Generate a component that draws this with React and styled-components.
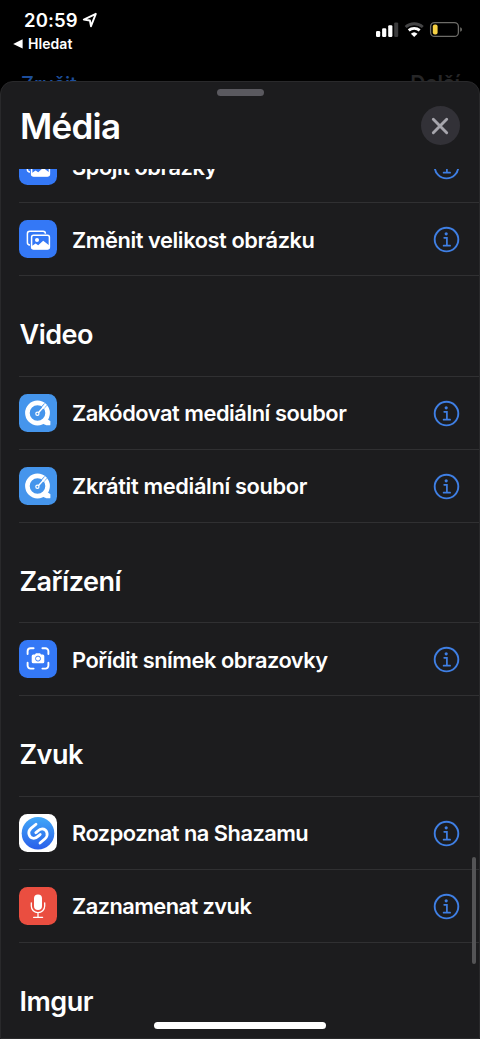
import React from 'react'
import styled, { createGlobalStyle } from 'styled-components'

const GlobalStyle = createGlobalStyle`
    html, body {
        margin: 0;
        padding: 0;
        background: #000;
        overflow: hidden;
    }
    * {
        box-sizing: border-box;
    }
`

const sections = [
    {
        rows: [
            { label: 'Spojit obrázky', icon: 'photos', spacing: '-0.45px' },
            { label: 'Změnit velikost obrázku', icon: 'photos', spacing: '-0.41px' },
        ],
    },
    {
        title: 'Video',
        rows: [
            { label: 'Zakódovat mediální soubor', icon: 'quicktime', spacing: '-0.44px' },
            { label: 'Zkrátit mediální soubor', icon: 'quicktime', spacing: '-0.34px' },
        ],
    },
    {
        title: 'Zařízení',
        rows: [{ label: 'Pořídit snímek obrazovky', icon: 'screenshot', spacing: '-0.45px' }],
    },
    {
        title: 'Zvuk',
        rows: [
            { label: 'Rozpoznat na Shazamu', icon: 'shazam', spacing: '-0.5px' },
            { label: 'Zaznamenat zvuk', icon: 'mic', spacing: '-0.54px' },
        ],
    },
    { title: 'Imgur', rows: [] },
]

const tileColors = {
    photos: '#3478f6',
    quicktime: '#4595ec',
    screenshot: '#3478f6',
    shazam: '#fff',
    mic: '#ea4e40',
}

const PhotosIcon = () => (
    <svg width="38" height="38" viewBox="0 0 38 38" fill="none">
        <rect x="8.4" y="11.3" width="18" height="13.6" rx="2.4" stroke="#fff" strokeWidth="1.5" />
        <rect x="11" y="13.7" width="21" height="17" rx="3.4" fill="#3478f6" />
        <rect x="12.6" y="15.3" width="17.8" height="13.8" rx="2" stroke="#fff" strokeWidth="1.5" />
        <circle cx="18" cy="20" r="2" fill="#fff" />
        <path d="M12.5 26.3 L16.6 23.4 L19.2 25.2 L24.2 20.8 L30.4 25.6 V27.5 A2 2 0 0 1 28.6 29.2 H14.5 A2 2 0 0 1 12.5 27.5 Z" fill="#fff" />
    </svg>
)

const QuickTimeIcon = () => (
    <svg width="38" height="38" viewBox="0 0 38 38" fill="none">
        <circle cx="18.5" cy="19" r="10.1" stroke="#fff" strokeWidth="4.6" />
        <path d="M22 26 L29 25.4 L31.4 27.2 V30.4 A0.9 0.9 0 0 1 30.5 31.3 H27.4 Q24.8 31 22 28 Z" fill="#fff" />
        <path d="M22 15.5 L26.6 10.6" stroke="#4595ec" strokeWidth="3.6" />
        <path d="M19.6 18.5 L24.8 12.8" stroke="#fff" strokeWidth="1.4" strokeLinecap="round" />
        <path d="M24.2 13.4 L26.2 10.9" stroke="#fff" strokeWidth="2.4" strokeLinecap="round" />
        <circle cx="18.4" cy="19.8" r="1.6" stroke="#fff" strokeWidth="1.2" />
    </svg>
)

const ScreenshotIcon = () => (
    <svg width="38" height="38" viewBox="0 0 38 38" fill="none">
        <path
            d="M8.6 14 V11.2 A3 3 0 0 1 11.6 8.2 H14.6 M23.4 8.2 H26.4 A3 3 0 0 1 29.4 11.2 V14 M29.4 22.8 V25.6 A3 3 0 0 1 26.4 28.6 H23.4 M14.6 28.6 H11.6 A3 3 0 0 1 8.6 25.6 V22.8"
            stroke="#fff"
            strokeWidth="1.9"
            strokeLinecap="round"
        />
        <path d="M14.2 14.4 H16 L16.9 13.2 H21.1 L22 14.4 H23.8 A1.5 1.5 0 0 1 25.3 15.9 V21.8 A1.5 1.5 0 0 1 23.8 23.3 H14.2 A1.5 1.5 0 0 1 12.7 21.8 V15.9 A1.5 1.5 0 0 1 14.2 14.4 Z" fill="#fff" />
        <circle cx="19" cy="18.6" r="2.5" stroke="#3478f6" strokeWidth="0.9" />
    </svg>
)

const ShazamIcon = () => (
    <svg width="38" height="38" viewBox="0 0 38 38" fill="none">
        <defs>
            <linearGradient id="shazam" x1="0" y1="0" x2="0" y2="1">
                <stop offset="0" stopColor="#42a8f8" />
                <stop offset="1" stopColor="#2a5fea" />
            </linearGradient>
        </defs>
        <circle cx="19" cy="19.2" r="16.3" fill="url(#shazam)" />
        <g stroke="#fff" strokeWidth="2.8" strokeLinecap="round">
            <path d="M17 10.2 L12 14.4 C8 18 10 24.3 14.8 24.3 C17.4 24.3 19 22.3 21.2 20.5" />
            <path d="M21 29 L26 24.8 C30 21.2 28 14.9 23.2 14.9 C20.6 14.9 19 16.9 16.8 18.7" />
        </g>
    </svg>
)

const MicIcon = () => (
    <svg width="38" height="38" viewBox="0 0 38 38" fill="none">
        <rect x="15" y="7.4" width="8" height="15.6" rx="4" fill="#fff" />
        <path d="M12.3 15.8 V19 A6.7 6.7 0 0 0 25.7 19 V15.8 M19 26 V30 M14.6 30.3 H23.6" stroke="#fff" strokeWidth="1.3" strokeLinecap="round" />
    </svg>
)

const icons = {
    photos: PhotosIcon,
    quicktime: QuickTimeIcon,
    screenshot: ScreenshotIcon,
    shazam: ShazamIcon,
    mic: MicIcon,
}

const InfoIcon = () => (
    <svg width="28" height="28" viewBox="0 0 28 28" fill="none">
        <circle cx="13.5" cy="14.6" r="11.8" stroke="#3f7fe4" strokeWidth="1.9" />
        <circle cx="13.2" cy="8.8" r="1.6" fill="#3f7fe4" />
        <path d="M11.2 12.8 H13.9 V20.6 M10.6 20.7 H17.1" stroke="#3f7fe4" strokeWidth="1.7" strokeLinecap="round" />
    </svg>
)

const StatusIcons = () => (
    <svg width="90" height="18" viewBox="0 0 90 18" fill="none">
        <rect x="2" y="11" width="4.2" height="6" rx="1.2" fill="#fff" />
        <rect x="8.1" y="8.2" width="4.2" height="8.8" rx="1.2" fill="#fff" />
        <rect x="14.2" y="5.2" width="4.2" height="11.8" rx="1.2" fill="#fff" />
        <rect x="20.2" y="2.4" width="4" height="14.6" rx="1.2" fill="#3b3b3c" />
        <path d="M31.6 7 A13 13 0 0 1 48.8 7" stroke="#454546" strokeWidth="2.8" />
        <path d="M34.7 10.4 A8.6 8.6 0 0 1 45.7 10.4" stroke="#fff" strokeWidth="2.8" />
        <path d="M40.2 17 L36.9 13.7 A4.8 4.8 0 0 1 43.5 13.7 Z" fill="#fff" />
        <rect x="56.6" y="2.6" width="27.8" height="13.8" rx="4" stroke="#6d6c68" strokeWidth="1.3" />
        <rect x="58.8" y="4.6" width="4.8" height="9.8" rx="2" fill="#f6d143" />
        <path d="M86.2 7.2 Q88 7.8 88 9.4 Q88 11.1 86.2 11.8 Z" fill="#6d6c68" />
    </svg>
)

const App = () => {
    return (
        <Phone>
            <GlobalStyle />
            <StatusBar>
                <StatusLeft>
                    <TimeLine>
                        20:59
                        <svg width="16" height="16" viewBox="0 0 16 16" fill="none">
                            <path d="M13.8 1.8 L1.8 7.6 L7.9 8.5 L9 14.2 Z" stroke="#fff" strokeWidth="1.9" strokeLinejoin="round" />
                        </svg>
                    </TimeLine>
                    <BackLine>
                        <svg width="10" height="10" viewBox="0 0 10 10">
                            <path d="M9.6 0.3 V9.5 L0.2 4.9 Z" fill="#fff" />
                        </svg>
                        Hledat
                    </BackLine>
                </StatusLeft>
                <StatusIcons />
            </StatusBar>
            <NavPeek>
                <NavText $color="#1d4e9b">Zrušit</NavText>
                <NavText $color="#262627" $bold>Další</NavText>
            </NavPeek>
            <Sheet>
                <Grabber />
                <SheetHeader>
                    <SheetTitle>Média</SheetTitle>
                    <CloseButton>
                        <svg width="18" height="18" viewBox="0 0 18 18">
                            <path d="M2.3 2.3 L15.7 15.7 M15.7 2.3 L2.3 15.7" stroke="#a6a5ac" strokeWidth="2.9" strokeLinecap="round" />
                        </svg>
                    </CloseButton>
                </SheetHeader>
                <ScrollArea>
                    <List>
                        {sections.map((section, i) => (
                            <section key={i}>
                                {section.title && <SectionTitle>{section.title}</SectionTitle>}
                                {section.rows.map((row) => {
                                    const Icon = icons[row.icon]
                                    return (
                                        <Row key={row.label}>
                                            <IconTile $color={tileColors[row.icon]}>
                                                <Icon />
                                            </IconTile>
                                            <RowLabel $spacing={row.spacing}>{row.label}</RowLabel>
                                            <InfoIcon />
                                        </Row>
                                    )
                                })}
                            </section>
                        ))}
                    </List>
                    <ScrollThumb />
                </ScrollArea>
                <HomeIndicator />
            </Sheet>
        </Phone>
    )
}

export default App

const Phone = styled.div`
    display: flex;
    flex-direction: column;
    width: 480px;
    height: 1039px;
    overflow: hidden;
    background: #000;
    color: #fff;
    font-family: Inter, "Liberation Sans", sans-serif;
`

const StatusBar = styled.header`
    display: flex;
    justify-content: space-between;
    height: 71px;
    flex-shrink: 0;
    padding: 9px 16px 0 13px;

    > svg {
        margin-top: 11px;
    }
`

const StatusLeft = styled.div`
    display: flex;
    flex-direction: column;
`

const TimeLine = styled.div`
    display: flex;
    align-items: center;
    gap: 4px;
    height: 22px;
    padding-left: 11px;
    font-size: 18.5px;
    font-weight: 600;
    line-height: 22px;
    letter-spacing: 0.1px;
`

const BackLine = styled.div`
    display: flex;
    align-items: center;
    gap: 5px;
    height: 18px;
    margin-top: 4px;
    font-size: 14px;
    font-weight: 600;
    line-height: 18px;
    letter-spacing: 0.05px;
`

const NavPeek = styled.nav`
    display: flex;
    justify-content: space-between;
    height: 10px;
    flex-shrink: 0;
    padding: 0 20px 0 21px;
    overflow: hidden;
`

const NavText = styled.span`
    color: ${({ $color }) => $color};
    font-size: ${({ $bold }) => ($bold ? '21px' : '20.3px')};
    font-weight: ${({ $bold }) => ($bold ? 600 : 500)};
    line-height: 26px;
`

const Sheet = styled.main`
    display: flex;
    flex-direction: column;
    position: relative;
    flex: 1;
    min-height: 0;
    background: #1c1c1e;
    border: 1px solid #29292b;
    border-radius: 13px 13px 0 0;
`

const Grabber = styled.div`
    width: 47px;
    height: 7px;
    margin: 7px auto 0;
    flex-shrink: 0;
    border-radius: 4px;
    background: #5a595f;
`

const SheetHeader = styled.div`
    display: flex;
    align-items: center;
    justify-content: space-between;
    height: 73px;
    flex-shrink: 0;
    padding: 0 19.5px 14px 19px;
`

const SheetTitle = styled.h1`
    margin: 0;
    font-size: 35px;
    font-weight: 600;
    line-height: 42px;
    letter-spacing: -0.75px;
`

const CloseButton = styled.button`
    display: flex;
    align-items: center;
    justify-content: center;
    width: 39px;
    height: 39px;
    padding: 0;
    border: none;
    border-radius: 50%;
    background: #323137;
`

const ScrollArea = styled.div`
    position: relative;
    flex: 1;
    min-height: 0;
    overflow: hidden;
`

const List = styled.div`
    margin-top: -39px;
    padding-left: 18px;
`

const SectionTitle = styled.h2`
    display: flex;
    align-items: center;
    height: 100.67px;
    margin: 0;
    padding: 18.5px 0 0 0.5px;
    border-bottom: 1px solid #303032;
    font-size: 27px;
    font-weight: 600;
    line-height: 34px;
    letter-spacing: -0.5px;
`

const Row = styled.div`
    display: flex;
    align-items: center;
    height: 73px;
    padding-right: 18px;
    border-bottom: 1px solid #303032;
`

const IconTile = styled.div`
    width: 38px;
    height: 38px;
    flex-shrink: 0;
    border-radius: 8.5px;
    overflow: hidden;
    background: ${({ $color }) => $color};
`

const RowLabel = styled.span`
    flex: 1;
    margin: 1px 0 0 15px;
    font-size: 21.8px;
    font-weight: 600;
    line-height: 28px;
    white-space: nowrap;
    letter-spacing: ${({ $spacing }) => $spacing};
`

const ScrollThumb = styled.div`
    position: absolute;
    top: 688px;
    right: 3px;
    width: 4px;
    height: 107px;
    border-radius: 2px;
    background: #545456;
`

const HomeIndicator = styled.div`
    position: absolute;
    bottom: 9px;
    left: 153px;
    width: 172px;
    height: 7px;
    border-radius: 4px;
    background: #fff;
`
